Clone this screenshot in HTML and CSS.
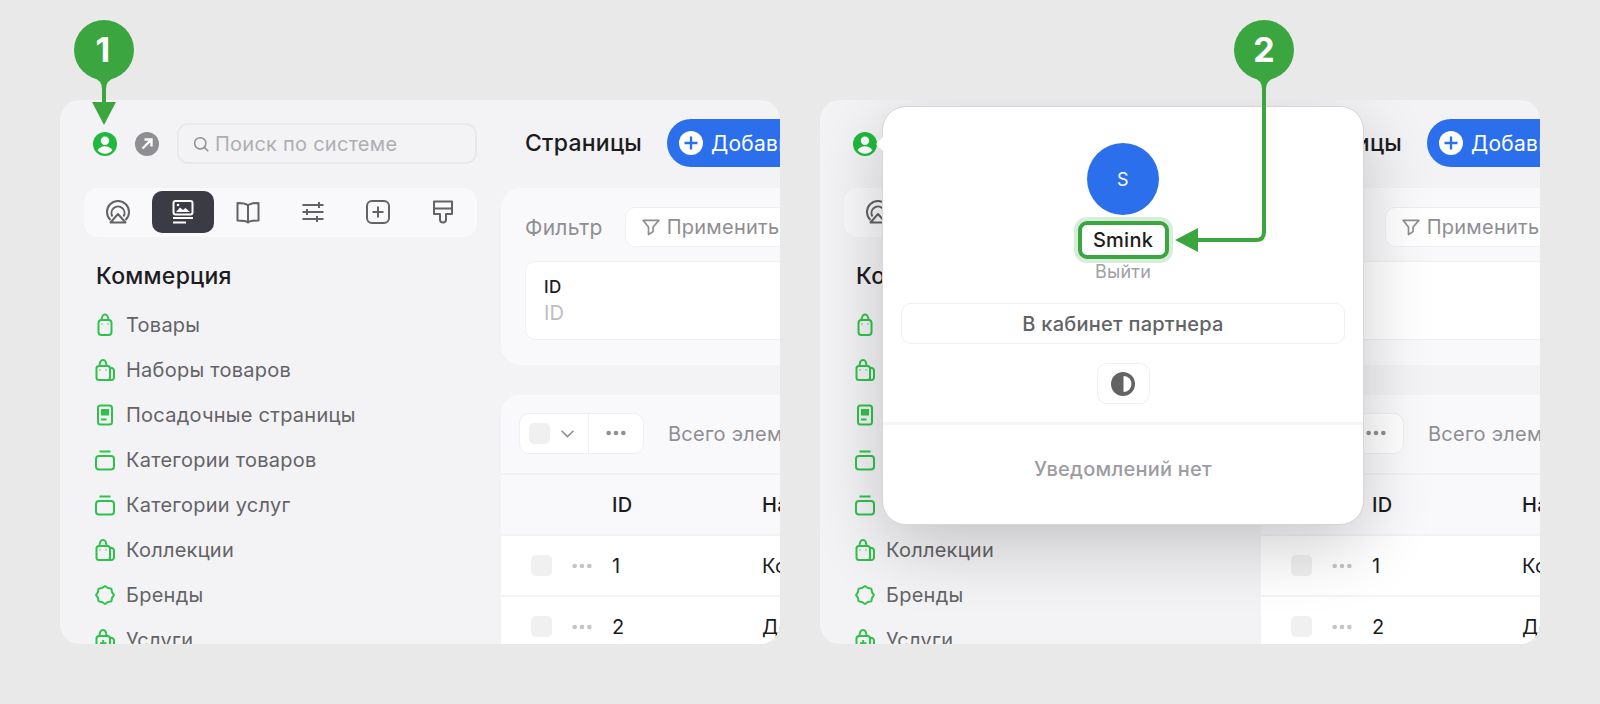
FILE: index.html
```html
<!DOCTYPE html>
<html lang="ru">
<head>
    <meta charset="UTF-8">
    <meta name="viewport" content="width=device-width, initial-scale=1.0">
    <title>Страницы</title>
    <link rel="stylesheet" href="styles.css">
</head>
<body>
    <!-- общие иконки -->
    <svg class="sprite" xmlns="http://www.w3.org/2000/svg">
        <symbol id="i-user" viewBox="0 0 24 24">
            <circle cx="12" cy="12" r="12" fill="#1fba3d"/>
            <circle cx="12" cy="8.8" r="4.2" fill="#fff"/>
            <path d="M4.6 18.2c1.6-2.7 4.300-4 7.400-4s5.800 1.300 7.400 4c-1.800 2.200-4.500 3.500-7.400 3.500s-5.600-1.300-7.400-3.500z" fill="#fff"/>
        </symbol>
        <symbol id="i-open" viewBox="0 0 24 24">
            <circle cx="12" cy="12" r="12" fill="#8e8e93"/>
            <path d="M7.500 16.500L16 8M9.500 7.500h7v7" fill="none" stroke="#fff" stroke-width="2.400"/>
        </symbol>
        <symbol id="i-search" viewBox="0 0 24 24">
            <circle cx="11" cy="11" r="7.500" fill="none" stroke="currentColor" stroke-width="2"/>
            <path d="M16.500 16.500L21 21" fill="none" stroke="currentColor" stroke-width="2" stroke-linecap="round"/>
        </symbol>
        <symbol id="i-radar" viewBox="0 0 24 24">
            <g fill="none" stroke="currentColor" stroke-width="2" stroke-linejoin="round">
                <path d="M4.500 20A11 11 0 1 1 19.500 20"/>
                <path d="M6.500 16.500A6.500 6.500 0 1 1 17.500 16.500"/>
                <path d="M12 14l7.500 8.500h-15z"/>
            </g>
        </symbol>
        <symbol id="i-pages" viewBox="0 0 24 24">
            <rect x="2.500" y="1" width="19" height="13.500" rx="2" fill="none" stroke="currentColor" stroke-width="2"/>
            <path d="M5 12l4-4.500 3 2.500 2.500-2 4.500 4z" fill="currentColor"/>
            <circle cx="7" cy="5" r="1.300" fill="currentColor"/>
            <path d="M2 18h20M2 22.500h13" fill="none" stroke="currentColor" stroke-width="2"/>
        </symbol>
        <symbol id="i-book" viewBox="0 0 24 24">
            <path d="M12 5.500C10.500 3.800 8 3 1.500 3v17.500c6.500 0 9 .4 10.500 2 1.500-1.600 4-2 10.500-2V3C16 3 13.500 3.800 12 5.500zM12 5.500v17" fill="none" stroke="currentColor" stroke-width="2" stroke-linejoin="round"/>
        </symbol>
        <symbol id="i-sliders" viewBox="0 0 24 24">
            <path d="M1.500 5h21M1.500 12h21M1.500 19h21M18 2v6M6 9v6M16 16v6" fill="none" stroke="currentColor" stroke-width="2"/>
        </symbol>
        <symbol id="i-plus-box" viewBox="0 0 24 24">
            <rect x="1" y="1" width="22" height="22" rx="5" fill="none" stroke="currentColor" stroke-width="2"/>
            <path d="M12 6.500v11M6.500 12h11" fill="none" stroke="currentColor" stroke-width="2"/>
        </symbol>
        <symbol id="i-brush" viewBox="0 0 24 24">
            <path d="M3 1.500h18V14h-6v5.500a3 3 0 0 1-6 0V14H3zM3 8.500h18" fill="none" stroke="currentColor" stroke-width="2" stroke-linejoin="round"/>
        </symbol>
        <symbol id="i-bag" viewBox="0 0 24 24">
            <g fill="none" stroke="currentColor" stroke-width="2">
                <rect x="5.500" y="7" width="13" height="15" rx="3"/>
                <path d="M8.500 7.500C8.500 4 10 1.500 12 1.500s3.500 2.500 3.500 6"/>
            </g>
            <path d="M9 10.500v1M15 10.500v1" stroke="currentColor" stroke-width="1.400"/>
        </symbol>
        <symbol id="i-bags" viewBox="0 0 24 24">
            <g fill="none" stroke="currentColor" stroke-width="2">
                <rect x="3.500" y="8" width="13.500" height="14" rx="2.500"/>
                <path d="M6.500 8.500C6.500 4.500 8 2 10 2s3.500 2.500 3.500 6.500M17 10h1.500a2.500 2.500 0 0 1 2.500 2.500V19.500a2.500 2.500 0 0 1-2.500 2.500H15"/>
            </g>
            <path d="M7 11.500v1M13 11.500v1" stroke="currentColor" stroke-width="1.400"/>
        </symbol>
        <symbol id="i-landing" viewBox="0 0 24 24">
            <rect x="5" y="2.500" width="14" height="19" rx="2.500" fill="none" stroke="currentColor" stroke-width="2"/>
            <rect x="8" y="6" width="8" height="6.500" fill="currentColor"/>
            <path d="M8 16.500h5.500" stroke="currentColor" stroke-width="2"/>
        </symbol>
        <symbol id="i-category" viewBox="0 0 24 24">
            <rect x="3" y="8" width="18" height="13.500" rx="3" fill="none" stroke="currentColor" stroke-width="2"/>
            <path d="M6.500 3.500h11" stroke="currentColor" stroke-width="2"/>
        </symbol>
        <symbol id="i-brand" viewBox="0 0 24 24">
            <polygon points="21,12 19.020,14.910 18.360,18.360 14.910,19.020 12,21 9.090,19.020 5.640,18.360 4.980,14.910 3,12 4.980,9.090 5.640,5.640 9.090,4.980 12,3 14.910,4.980 18.360,5.640 19.020,9.090" fill="none" stroke="currentColor" stroke-width="2" stroke-linejoin="round"/>
        </symbol>
        <symbol id="i-service" viewBox="0 0 24 24">
            <g fill="none" stroke="currentColor" stroke-width="2">
                <rect x="3.500" y="8" width="13.500" height="14" rx="2.500"/>
                <path d="M6.500 8.500C6.500 4.500 8 2 10 2s3.500 2.500 3.500 6.500M17 10h1.500a2.500 2.500 0 0 1 2.500 2.500V19.500a2.500 2.500 0 0 1-2.500 2.500H15M10.200 12v6.500M7 15.200h6.500"/>
            </g>
        </symbol>
        <symbol id="i-add" viewBox="0 0 24 24">
            <circle cx="12" cy="12" r="12" fill="#fff"/>
            <path d="M12 5.500v13M5.500 12h13" fill="none" stroke="#2b6fed" stroke-width="2.400"/>
        </symbol>
        <symbol id="i-filter" viewBox="0 0 24 24">
            <path d="M2.500 4h19l-7 8v5.500l-5.500 3.500v-9z" fill="none" stroke="currentColor" stroke-width="2" stroke-linejoin="round"/>
        </symbol>
        <symbol id="i-chevron" viewBox="0 0 24 24">
            <path d="M4.500 8.500L12 16l7.500-7.500" fill="none" stroke="currentColor" stroke-width="2"/>
        </symbol>
        <symbol id="i-dots" viewBox="0 0 24 6">
            <circle cx="4" cy="3" r="2.500" fill="currentColor"/>
            <circle cx="12" cy="3" r="2.500" fill="currentColor"/>
            <circle cx="20" cy="3" r="2.500" fill="currentColor"/>
        </symbol>
        <symbol id="i-theme" viewBox="0 0 24 24">
            <circle cx="12" cy="12" r="12" fill="currentColor"/>
            <path d="M12.500 4a8 8 0 0 1 0 16z" fill="#fff"/>
        </symbol>
    </svg>

    <div class="panel">
        <aside class="sidebar">
            <div class="top-row">
                <svg class="round-icon"><use href="#i-user"/></svg>
                <svg class="round-icon"><use href="#i-open"/></svg>
                <div class="search">
                    <svg class="search-icon"><use href="#i-search"/></svg>
                    <span>Поиск по системе</span>
                </div>
            </div>
            <div class="tabs">
                <div class="tab"><svg class="tab-icon"><use href="#i-radar"/></svg></div>
                <div class="tab active"><svg class="tab-icon"><use href="#i-pages"/></svg></div>
                <div class="tab"><svg class="tab-icon"><use href="#i-book"/></svg></div>
                <div class="tab"><svg class="tab-icon"><use href="#i-sliders"/></svg></div>
                <div class="tab"><svg class="tab-icon"><use href="#i-plus-box"/></svg></div>
                <div class="tab"><svg class="tab-icon"><use href="#i-brush"/></svg></div>
            </div>
            <h2 class="nav-title">Коммерция</h2>
            <ul class="nav">
                <li><svg class="nav-icon"><use href="#i-bag"/></svg>Товары</li>
                <li><svg class="nav-icon"><use href="#i-bags"/></svg>Наборы товаров</li>
                <li><svg class="nav-icon"><use href="#i-landing"/></svg>Посадочные страницы</li>
                <li><svg class="nav-icon"><use href="#i-category"/></svg>Категории товаров</li>
                <li><svg class="nav-icon"><use href="#i-category"/></svg>Категории услуг</li>
                <li><svg class="nav-icon"><use href="#i-bags"/></svg>Коллекции</li>
                <li><svg class="nav-icon"><use href="#i-brand"/></svg>Бренды</li>
                <li><svg class="nav-icon"><use href="#i-service"/></svg>Услуги</li>
            </ul>
        </aside>
        <main class="main">
            <div class="page-head">
                <h1 class="page-title">Страницы</h1>
                <div class="add-button"><svg class="round-icon"><use href="#i-add"/></svg>Добавить</div>
            </div>
            <section class="filter-card">
                <div class="filter-head">
                    <span class="filter-label">Фильтр</span>
                    <div class="apply-button"><svg class="filter-icon"><use href="#i-filter"/></svg>Применить</div>
                </div>
                <div class="field">
                    <div class="field-label">ID</div>
                    <div class="field-value">ID</div>
                </div>
            </section>
            <section class="table-card">
                <div class="toolbar">
                    <div class="bulk">
                        <div class="bulk-check">
                            <span class="checkbox"></span>
                            <svg class="chevron"><use href="#i-chevron"/></svg>
                        </div>
                        <div class="bulk-more"><svg class="dots"><use href="#i-dots"/></svg></div>
                    </div>
                    <span class="total">Всего элементов: 2</span>
                </div>
                <div class="row head-row">
                    <div></div>
                    <div>ID</div>
                    <div>Название</div>
                </div>
                <div class="row">
                    <div class="row-tools"><span class="checkbox"></span><svg class="dots light"><use href="#i-dots"/></svg></div>
                    <div>1</div>
                    <div>Контакты</div>
                </div>
                <div class="row">
                    <div class="row-tools"><span class="checkbox"></span><svg class="dots light"><use href="#i-dots"/></svg></div>
                    <div>2</div>
                    <div>Доставка</div>
                </div>
            </section>
        </main>
    </div>

    <div class="panel">
        <aside class="sidebar">
            <div class="top-row">
                <svg class="round-icon"><use href="#i-user"/></svg>
                <svg class="round-icon"><use href="#i-open"/></svg>
                <div class="search">
                    <svg class="search-icon"><use href="#i-search"/></svg>
                    <span>Поиск по системе</span>
                </div>
            </div>
            <div class="tabs">
                <div class="tab"><svg class="tab-icon"><use href="#i-radar"/></svg></div>
                <div class="tab active"><svg class="tab-icon"><use href="#i-pages"/></svg></div>
                <div class="tab"><svg class="tab-icon"><use href="#i-book"/></svg></div>
                <div class="tab"><svg class="tab-icon"><use href="#i-sliders"/></svg></div>
                <div class="tab"><svg class="tab-icon"><use href="#i-plus-box"/></svg></div>
                <div class="tab"><svg class="tab-icon"><use href="#i-brush"/></svg></div>
            </div>
            <h2 class="nav-title">Коммерция</h2>
            <ul class="nav">
                <li><svg class="nav-icon"><use href="#i-bag"/></svg>Товары</li>
                <li><svg class="nav-icon"><use href="#i-bags"/></svg>Наборы товаров</li>
                <li><svg class="nav-icon"><use href="#i-landing"/></svg>Посадочные страницы</li>
                <li><svg class="nav-icon"><use href="#i-category"/></svg>Категории товаров</li>
                <li><svg class="nav-icon"><use href="#i-category"/></svg>Категории услуг</li>
                <li><svg class="nav-icon"><use href="#i-bags"/></svg>Коллекции</li>
                <li><svg class="nav-icon"><use href="#i-brand"/></svg>Бренды</li>
                <li><svg class="nav-icon"><use href="#i-service"/></svg>Услуги</li>
            </ul>
        </aside>
        <main class="main">
            <div class="page-head">
                <h1 class="page-title">Страницы</h1>
                <div class="add-button"><svg class="round-icon"><use href="#i-add"/></svg>Добавить</div>
            </div>
            <section class="filter-card">
                <div class="filter-head">
                    <span class="filter-label">Фильтр</span>
                    <div class="apply-button"><svg class="filter-icon"><use href="#i-filter"/></svg>Применить</div>
                </div>
                <div class="field">
                    <div class="field-label">ID</div>
                    <div class="field-value">ID</div>
                </div>
            </section>
            <section class="table-card">
                <div class="toolbar">
                    <div class="bulk">
                        <div class="bulk-check">
                            <span class="checkbox"></span>
                            <svg class="chevron"><use href="#i-chevron"/></svg>
                        </div>
                        <div class="bulk-more"><svg class="dots"><use href="#i-dots"/></svg></div>
                    </div>
                    <span class="total">Всего элементов: 2</span>
                </div>
                <div class="row head-row">
                    <div></div>
                    <div>ID</div>
                    <div>Название</div>
                </div>
                <div class="row">
                    <div class="row-tools"><span class="checkbox"></span><svg class="dots light"><use href="#i-dots"/></svg></div>
                    <div>1</div>
                    <div>Контакты</div>
                </div>
                <div class="row">
                    <div class="row-tools"><span class="checkbox"></span><svg class="dots light"><use href="#i-dots"/></svg></div>
                    <div>2</div>
                    <div>Доставка</div>
                </div>
            </section>
        </main>

        <!-- всплывающее меню профиля -->
        <div class="popup">
            <div class="popup-user">
                <div class="avatar">S</div>
                <div class="user-name">Smink</div>
                <div class="logout">Выйти</div>
                <div class="partner-button">В кабинет партнера</div>
                <div class="theme-button"><svg class="round-icon"><use href="#i-theme"/></svg></div>
            </div>
            <div class="no-notice">Уведомлений нет</div>
        </div>
    </div>

    <!-- стрелки и номера шагов поверх скриншотов -->
    <svg class="annotations" viewBox="0 0 1600 704" xmlns="http://www.w3.org/2000/svg">
        <g class="mark">
            <circle cx="104" cy="50" r="30"/>
            <path d="M92 77q10 3 10 12h4q0-9 10-12z"/>
            <rect x="102" y="85" width="4" height="20"/>
            <path d="M92 102h24l-12 23z"/>
        </g>
        <text class="mark-number" x="103" y="62">1</text>
        <g class="mark">
            <circle cx="1264" cy="50" r="30"/>
            <path d="M1252 77q10 3 10 12h4q0-9 10-12z"/>
            <path d="M1175 240l23-12v24z"/>
        </g>
        <path class="mark-line" d="M1264 85V232q0 8-8 8H1196"/>
        <text class="mark-number" x="1264" y="62">2</text>
    </svg>
</body>
</html>
```

FILE: styles.css
```css
* {
    box-sizing: border-box;
}
html, body {
    height: 100%;
}
body {
    margin: 0;
    height: 704px;
    padding: 100px 60px 60px;
    display: flex;
    gap: 40px;
    overflow: hidden;
    position: relative;
    background: #e9e9e9;
    font-family: Inter, "Noto Sans", sans-serif;
    font-size: 20px;
    letter-spacing: 0.25px;
    color: #1c1c1e;
}
.sprite {
    position: absolute;
    width: 0;
    height: 0;
}

/* панель */
.panel {
    position: relative;
    display: flex;
    width: 720px;
    height: 544px;
    overflow: hidden;
    border-radius: 20px;
    background: #f3f3f6;
}
.sidebar {
    flex: 0 0 441px;
    padding: 23px 24px 0;
}
.top-row {
    display: flex;
    align-items: center;
    height: 41px;
    padding-left: 9px;
    gap: 18px;
}
.round-icon {
    flex: none;
    width: 24px;
    height: 24px;
}
.search {
    flex: 1;
    display: flex;
    align-items: center;
    gap: 5px;
    height: 41px;
    padding-left: 13px;
    border: 2px solid #e9e9ec;
    border-radius: 11px;
    color: #aeaeb2;
}
.search-icon {
    width: 18px;
    height: 18px;
    color: #8e8e93;
}
.tabs {
    display: grid;
    grid-template-columns: repeat(6, 1fr);
    gap: 3px;
    height: 49px;
    margin-top: 24px;
    padding: 3px 3px 4px;
    border-radius: 14px;
    background: #f9f9fb;
}
.tab {
    display: flex;
    align-items: center;
    justify-content: center;
    border-radius: 10px;
    color: #636366;
}
.tab.active {
    background: #3a3b44;
    color: #fff;
}
.tab-icon {
    width: 24px;
    height: 24px;
}
.nav-title {
    margin: 25px 0 0 12px;
    font-size: 23px;
    line-height: 28px;
    font-weight: 500;
}
.nav {
    list-style: none;
    margin: 12px 0 0;
    padding: 0 0 0 9px;
}
.nav li {
    display: flex;
    align-items: center;
    gap: 9px;
    height: 45px;
    color: #636366;
}
.nav-icon {
    flex: none;
    width: 24px;
    height: 24px;
    color: #2fc24a;
}

/* основная часть */
.main {
    flex: 1;
    min-width: 0;
    overflow: hidden;
    padding-top: 19px;
}
.page-head {
    display: flex;
    align-items: center;
    gap: 25px;
    height: 48px;
    padding-left: 24px;
    white-space: nowrap;
}
.page-title {
    margin: 0;
    font-size: 23px;
    font-weight: 500;
}
.add-button {
    flex: none;
    display: flex;
    align-items: center;
    gap: 8px;
    height: 48px;
    padding: 0 24px 0 12px;
    border-radius: 24px;
    background: #2b6fed;
    color: #fff;
    font-size: 21px;
}
.filter-card {
    width: 800px;
    height: 177px;
    margin-top: 21px;
    padding: 19px 24px 0;
    border-radius: 20px;
    background: #f9f9fb;
}
.filter-head {
    display: flex;
    align-items: center;
    gap: 22px;
    height: 40px;
}
.filter-label {
    font-size: 21px;
    color: #8e8e93;
}
.apply-button {
    display: flex;
    align-items: center;
    gap: 6px;
    height: 40px;
    padding: 0 15px;
    border: 1px solid #f0f0f2;
    border-radius: 10px;
    background: #fff;
    color: #8e8e93;
}
.filter-icon {
    width: 20px;
    height: 20px;
}
.field {
    height: 79px;
    margin-top: 14px;
    padding: 13px 18px 0;
    border: 1px solid #f0f0f2;
    border-radius: 10px;
    background: #fff;
}
.field-label {
    font-size: 17px;
    line-height: 24px;
    font-weight: 500;
}
.field-value {
    margin-top: 1px;
    line-height: 26px;
    color: #bdbdc1;
}
.table-card {
    width: 800px;
    height: 260px;
    margin-top: 30px;
    border-radius: 20px 20px 0 0;
    overflow: hidden;
    background: #fff;
}
.toolbar {
    display: flex;
    align-items: center;
    gap: 24px;
    height: 80px;
    padding: 0 18px 2px;
    border-bottom: 2px solid #f3f3f5;
    background: #f9f9fb;
}
.bulk {
    display: flex;
    height: 41px;
    border: 1px solid #efeff1;
    border-radius: 10px;
    background: #fff;
}
.bulk-check {
    display: flex;
    align-items: center;
    gap: 8px;
    width: 69px;
    padding-left: 9px;
    border-right: 1px solid #efeff1;
}
.bulk-more {
    display: flex;
    align-items: center;
    justify-content: center;
    width: 54px;
}
.checkbox {
    flex: none;
    width: 21px;
    height: 21px;
    border-radius: 5px;
    background: #f0f0f1;
}
.chevron {
    width: 19px;
    height: 19px;
    color: #8e8e93;
}
.dots {
    width: 22px;
    height: 6px;
    color: #8e8e93;
}
.dots.light {
    color: #c4c4c6;
}
.total {
    padding-top: 2px;
    color: #8e8e93;
    white-space: nowrap;
}
.row {
    display: grid;
    grid-template-columns: 111px 150px 1fr;
    align-items: center;
    height: 61px;
    border-bottom: 2px solid #f3f3f5;
    white-space: nowrap;
}
.head-row {
    font-weight: 500;
    background: #f9f9fb;
}
.row-tools {
    display: flex;
    align-items: center;
    gap: 19px;
    padding-left: 30px;
}

/* всплывающее меню */
.popup {
    position: absolute;
    left: 62px;
    top: 6px;
    display: flex;
    flex-direction: column;
    width: 482px;
    height: 419px;
    border: 1px solid #d6d6d8;
    border-radius: 24px;
    background: #fff;
    box-shadow: 0 20px 70px rgba(0, 0, 0, 0.2);
}
.popup::before {
    content: "";
    position: absolute;
    left: -7px;
    top: 30px;
    border-style: solid;
    border-width: 7px 7px 7px 0;
    border-color: transparent #fff transparent transparent;
}
.popup-user {
    display: flex;
    flex-direction: column;
    align-items: center;
    padding: 36px 18px 18px;
    border-bottom: 3px solid #f6f6f7;
}
.avatar {
    display: flex;
    align-items: center;
    justify-content: center;
    width: 72px;
    height: 72px;
    border-radius: 50%;
    background: #2b6fed;
    color: #fff;
    font-size: 18px;
}
.user-name {
    display: flex;
    align-items: center;
    justify-content: center;
    width: 91px;
    height: 38px;
    margin-top: 6px;
    border: 4px solid #3ba640;
    border-radius: 9px;
    box-shadow: 0 0 0 4px rgba(59, 166, 64, 0.2);
    font-weight: 500;
}
.logout {
    margin-top: 3px;
    font-size: 18px;
    line-height: 20px;
    color: #a0a0a5;
}
.partner-button {
    display: flex;
    align-items: center;
    justify-content: center;
    align-self: stretch;
    height: 41px;
    margin-top: 21px;
    border: 1px solid #efeff1;
    border-radius: 10px;
    font-weight: 500;
    color: #636366;
}
.theme-button {
    display: flex;
    align-items: center;
    justify-content: center;
    width: 53px;
    height: 41px;
    margin-top: 19px;
    border: 1px solid #efeff1;
    border-radius: 10px;
    color: #636366;
}
.no-notice {
    margin-top: 32px;
    text-align: center;
    font-weight: 500;
    color: #9c9ca1;
}

/* разметка поверх скриншотов */
.annotations {
    position: absolute;
    left: 0;
    top: 0;
    width: 1600px;
    height: 704px;
    pointer-events: none;
}
.mark {
    fill: #3ba640;
}
.mark-line {
    fill: none;
    stroke: #3ba640;
    stroke-width: 4;
}
.mark-number {
    fill: #fff;
    font-size: 34px;
    font-weight: 700;
    text-anchor: middle;
}
```
